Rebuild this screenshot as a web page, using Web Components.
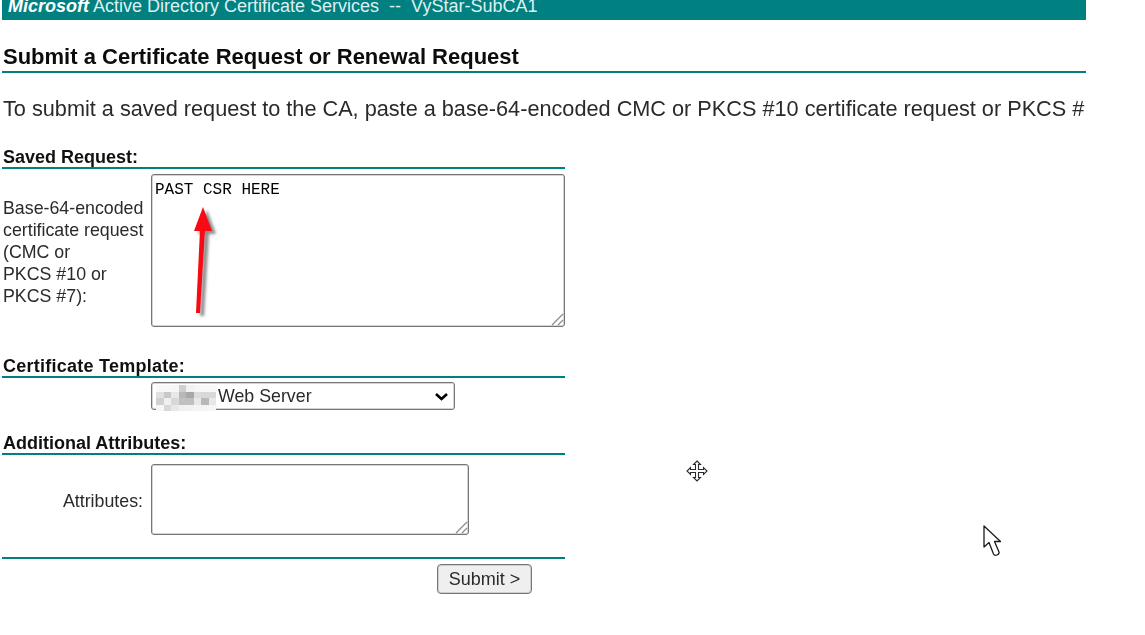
<!DOCTYPE html>
<html lang="en">
<head>
<meta charset="utf-8">
<title>Microsoft Active Directory Certificate Services</title>
<style>
  html, body { margin: 0; height: 100%; background: #fff; overflow: hidden; }
  body { font-family: "Liberation Sans", Arial, sans-serif; color: #111; }
</style>
</head>
<body>
<cert-page>
  <cert-banner product="Active Directory Certificate Services  --  VyStar-SubCA1"></cert-banner>
  <cert-heading>Submit a Certificate Request or Renewal Request</cert-heading>
  <cert-intro>To submit a saved request to the CA, paste a base-64-encoded CMC or PKCS #10 certificate request or PKCS #</cert-intro>

  <cert-section heading="Saved Request:" style="--top: 25px">
    <cert-field label="Base-64-encoded
certificate request
(CMC or
PKCS #10 or
PKCS #7):" style="--label-align: left; --label-top: 23px">
      <cert-textarea value="PAST CSR HERE" style="--w: 414px; --h: 153px"></cert-textarea>
    </cert-field>
  </cert-section>

  <cert-section heading="Certificate Template:" style="--top: 29px; --gap: 4px; --spacing: .25px">
    <cert-field>
      <cert-select value="Web Server"></cert-select>
    </cert-field>
  </cert-section>

  <cert-section heading="Additional Attributes:" style="--top: 23px; --gap: 9px">
    <cert-field label="Attributes:" style="--label-align: right; --label-top: 26px">
      <cert-textarea style="--w: 318px; --h: 71px"></cert-textarea>
    </cert-field>
  </cert-section>

  <cert-submit>Submit &gt;</cert-submit>

  <red-arrow></red-arrow>
  <cursor-move></cursor-move>
  <cursor-arrow></cursor-arrow>
</cert-page>

<script>
// small helper, every element just sets its shadow html once
class Base extends HTMLElement {
  connectedCallback() {
    if (!this.shadowRoot) this.attachShadow({ mode: 'open' });
    this.shadowRoot.innerHTML = this.markup();
  }
}

class CertPage extends Base {
  markup() {
    return `
      <style>
        :host { display: block; position: relative; width: 1145px; height: 635px; overflow: hidden;
                padding-left: 2px; box-sizing: border-box; filter: blur(0.35px); }
      </style>
      <slot></slot>`;
  }
}

class CertBanner extends Base {
  markup() {
    return `
      <style>
        :host { display: block; width: 1084px; height: 20px; background: #008080; color: #fff; overflow: hidden; }
        .line { display: block; padding-left: 6px; font-size: 18px; line-height: 13px; white-space: pre; color: #dff0f0; }
        b { font-style: italic; font-weight: 700; color: #fff; }
      </style>
      <span class="line"><b>Microsoft</b> ${this.getAttribute('product')}</span>`;
  }
}

class CertHeading extends Base {
  markup() {
    return `
      <style>
        :host { display: block; width: 1084px; margin-top: 23px; padding-left: 1px; box-sizing: border-box;
                border-bottom: 2px solid #008080; font-size: 22px; font-weight: 700; line-height: 28px; color: #0c0c0c; }
      </style>
      <slot></slot>`;
  }
}

class CertIntro extends Base {
  markup() {
    return `
      <style>
        :host { display: block; width: 1084px; height: 26px; margin-top: 23px; padding-left: 1px; box-sizing: border-box;
                white-space: nowrap; font-size: 21.7px; line-height: 26px; color: #2a2a2a; }
      </style>
      <slot></slot>`;
  }
}

class CertSection extends Base {
  markup() {
    return `
      <style>
        :host { display: block; width: 563px; margin-top: var(--top, 0); }
        h2 { margin: 0; padding-left: 1px; font-size: 18px; font-weight: 700; line-height: 20px; color: #111;
             letter-spacing: var(--spacing, 0); border-bottom: 2px solid #008080; }
        .body { padding-top: var(--gap, 5px); }
      </style>
      <h2>${this.getAttribute('heading')}</h2>
      <div class="body"><slot></slot></div>`;
  }
}

class CertField extends Base {
  markup() {
    const label = this.getAttribute('label') || '';
    return `
      <style>
        :host { display: grid; grid-template-columns: 142px auto; column-gap: 7px; justify-content: start; }
        .label { padding: var(--label-top, 0) 1px 0 1px; font-size: 17.8px; line-height: 22px; color: #2a2a2a;
                 white-space: pre; text-align: var(--label-align, left); }
      </style>
      <div class="label">${label}</div>
      <div><slot></slot></div>`;
  }
}

class CertTextarea extends Base {
  markup() {
    return `
      <style>
        :host { display: block; position: relative; width: var(--w); }
        textarea { display: block; width: var(--w); height: var(--h); box-sizing: border-box; margin: 0; resize: none;
                   padding: 6px 3px; border: 1px solid #767676; border-radius: 3px; background: #fff; color: #000;
                   box-shadow: inset 0 0 0 1px #d4d4d4;
                   font: 16px/18px "Liberation Mono", "Courier New", monospace; outline: 0; }
        svg { position: absolute; right: 1px; bottom: 1px; pointer-events: none; }
      </style>
      <textarea spellcheck="false">${this.getAttribute('value') || ''}</textarea>
      <svg width="14" height="14" viewBox="0 0 14 14"><path d="M2 13 L13 2 M8 13 L13 8" stroke="#8a8a8a" stroke-width="1.2" fill="none"/></svg>`;
  }
}

class CertSelect extends Base {
  markup() {
    // the blurred out company name in front of the template name
    const cells = ['#f8f8f8','#f8f8f8','#f6f6f6','#cfcfcf','#f2f2f2','#f6f6f6','#f8f8f8','#f8f8f8',
                   '#e0e0e0','#c8c8c8','#e8e8e8','#b8b8b8','#a8a8a8','#dcdcdc','#d8d8d8','#d8d8d8',
                   '#d0d0d0','#f0f0f0','#d8d8d8','#c0c0c0','#c0c0c0','#e8e8e8','#b8b8b8','#e8e8e8',
                   '#f6f6f6','#d8d8d8','#e8e8e8','#f0f0f0','#f2f2f2','#f4f4f4','#f4f4f4','#f6f6f6']
      .map(c => `<i style="background:${c}"></i>`).join('');
    return `
      <style>
        :host { display: block; position: relative; width: 304px; height: 28px; }
        select { display: block; width: 100%; height: 100%; box-sizing: border-box; margin: 0; padding: 0 0 0 66px;
                 appearance: none; border: 1px solid #767676; border-radius: 3px; background: #fff; color: #2a2a2a;
                 box-shadow: inset 0 0 0 1px #d4d4d4;
                 font: 17.8px "Liberation Sans", Arial, sans-serif; outline: 0; }
        .blur { position: absolute; left: 5px; top: 3px; display: grid; grid-template-columns: repeat(8, 7.5px);
                grid-auto-rows: 6.5px; filter: blur(0.5px); }
        i { display: block; }
        svg { position: absolute; left: 283px; top: 10px; }
      </style>
      <select><option>${this.getAttribute('value')}</option></select>
      <div class="blur">${cells}</div>
      <svg width="15" height="9" viewBox="0 0 15 9"><path d="M2 2 L7.5 7 L13 2" fill="none" stroke="#000" stroke-width="2.6"/></svg>`;
  }
}

class CertSubmit extends Base {
  markup() {
    return `
      <style>
        :host { display: block; width: 563px; margin-top: 22px; border-top: 2px solid #008080; padding-top: 5px; }
        .row { display: flex; padding-left: 435px; }
        button { width: 95px; height: 30px; margin: 0; padding: 0; border: 1px solid #767676; border-radius: 4px;
                 box-shadow: inset 0 0 0 1px #cfcfcf;
                 background: #efefef; color: #2a2a2a; font: 18px "Liberation Sans", Arial, sans-serif; }
      </style>
      <div class="row"><button type="button"><slot></slot></button></div>`;
  }
}

// annotation drawn on top of the screenshot
class RedArrow extends Base {
  markup() {
    return `
      <style>:host { position: absolute; left: 185px; top: 200px; width: 40px; height: 125px; display: block; }</style>
      <svg width="40" height="125" viewBox="0 0 40 125">
        <defs><filter id="s" x="-50%" y="-20%" width="200%" height="140%">
          <feGaussianBlur stdDeviation="1.8"/></filter></defs>
        <g filter="url(#s)" fill="#000" opacity=".45" transform="translate(4 3)">
          <path d="M18 7 L27 31 L9 31 Z"/><path d="M15 30 L20 30 L15 113 L11 113 Z"/>
        </g>
        <path d="M18 7 L27 31 L9 31 Z" fill="#f70a14"/>
        <path d="M15 30 L20 30 L15 113 L11 113 Z" fill="#f70a14"/>
      </svg>`;
  }
}

class CursorMove extends Base {
  markup() {
    return `
      <style>:host { position: absolute; left: 686px; top: 460px; width: 22px; height: 22px; display: block; }</style>
      <svg width="22" height="22" viewBox="0 0 22 22">
        <path d="M11 1 L14.5 4.5 L12.5 4.5 L12.5 9.5 L17.5 9.5 L17.5 7.5 L21 11 L17.5 14.5 L17.5 12.5 L12.5 12.5 L12.5 17.5 L14.5 17.5 L11 21 L7.5 17.5 L9.5 17.5 L9.5 12.5 L4.5 12.5 L4.5 14.5 L1 11 L4.5 7.5 L4.5 9.5 L9.5 9.5 L9.5 4.5 L7.5 4.5 Z"
              fill="#fff" stroke="#2a2a30" stroke-width="1.1" stroke-linejoin="miter"/>
      </svg>`;
  }
}

class CursorArrow extends Base {
  markup() {
    return `
      <style>:host { position: absolute; left: 980px; top: 523px; width: 24px; height: 36px; display: block; }</style>
      <svg width="24" height="36" viewBox="0 0 24 36">
        <path d="M4 3 L4 24 L9 19.5 L13.5 31 Q14.5 33 17 32 Q19.5 31 19 29 L14.5 18.5 L20.5 18.5 Z"
              fill="#fff" stroke="#1a1a1a" stroke-width="1.3" stroke-linejoin="round"/>
      </svg>`;
  }
}

customElements.define('cert-page', CertPage);
customElements.define('cert-banner', CertBanner);
customElements.define('cert-heading', CertHeading);
customElements.define('cert-intro', CertIntro);
customElements.define('cert-section', CertSection);
customElements.define('cert-field', CertField);
customElements.define('cert-textarea', CertTextarea);
customElements.define('cert-select', CertSelect);
customElements.define('cert-submit', CertSubmit);
customElements.define('red-arrow', RedArrow);
customElements.define('cursor-move', CursorMove);
customElements.define('cursor-arrow', CursorArrow);
</script>
</body>
</html>
